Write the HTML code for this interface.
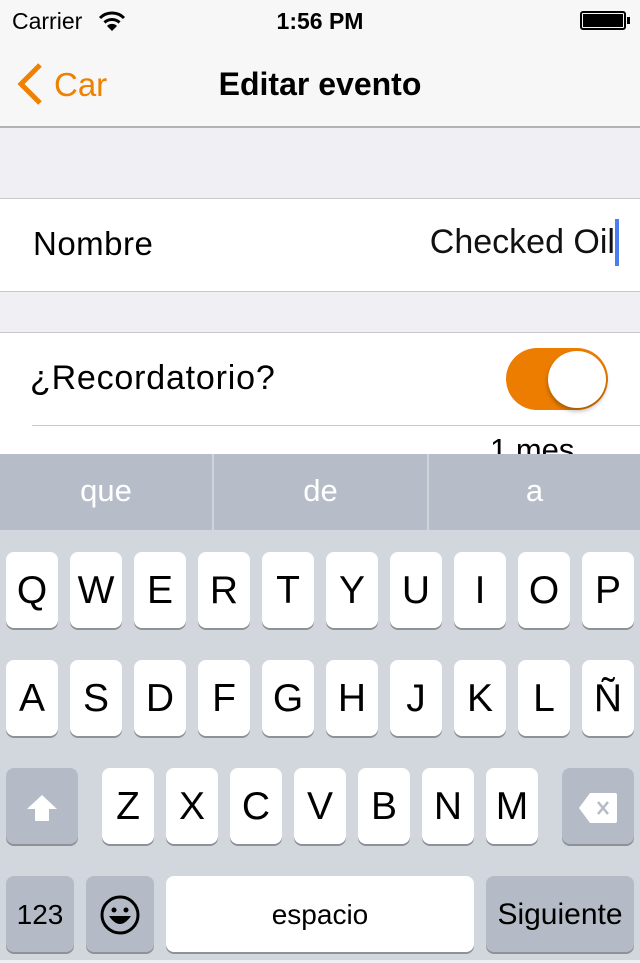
<!DOCTYPE html><html><head><meta charset="utf-8"><style>
*{margin:0;padding:0;box-sizing:border-box}
body{width:640px;height:960px;overflow:hidden;position:relative;background:#efeff4;font-family:"Liberation Sans",sans-serif}
.a{position:absolute}
.k{position:absolute;width:52px;height:76px;background:#fff;border-radius:8px;box-shadow:0 2px 0 #8e9198;font-size:39px;text-align:center;line-height:78px;color:#000}
.g{background:#b4bbc6}
</style></head><body>
<div class="a" style="left:0;top:0;width:640px;height:128px;background:#f7f7f7;border-bottom:2px solid #b2b2b2"></div>
<div class="a" style="left:12px;top:8px;font-size:23px">Carrier</div>
<svg class="a" style="left:98px;top:10px" width="28" height="22" viewBox="0 0 28 22"><path d="M2 8 A17 17 0 0 1 26 8" stroke="#000" stroke-width="3" fill="none"/><path d="M6.5 12.5 A11 11 0 0 1 21.5 12.5" stroke="#000" stroke-width="3" fill="none"/><path d="M14 21 L9 16 A7 7 0 0 1 19 16Z" fill="#000"/></svg>
<div class="a" style="left:0;width:640px;top:8px;text-align:center;font-size:23px;font-weight:bold">1:56 PM</div>
<div class="a" style="left:580px;top:11px;width:46px;height:19px;border:2px solid #000;border-radius:3px;padding:1px"><div style="width:100%;height:100%;background:#000"></div></div>
<div class="a" style="left:627px;top:17px;width:3px;height:7px;background:#000"></div>
<svg class="a" style="left:14px;top:62px" width="30" height="44" viewBox="0 0 30 44"><path d="M26 3 L7 22 L26 41" stroke="#ef8000" stroke-width="5" fill="none"/></svg>
<div class="a" style="left:54px;top:66px;font-size:33px;color:#ef8000">Car</div>
<div class="a" style="left:0;width:640px;top:66px;text-align:center;font-size:32px;font-weight:bold">Editar evento</div>
<div class="a" style="left:0;top:198px;width:640px;height:94px;background:#fff;border-top:1px solid #c8c7cc;border-bottom:1px solid #c8c7cc"></div>
<div class="a" style="left:33px;top:225px;font-size:33px;letter-spacing:0.5px">Nombre</div>
<div class="a" style="right:25px;top:223px;font-size:34px;color:#111">Checked Oil</div>
<div class="a" style="left:615px;top:219px;width:4px;height:47px;background:#4a7cf3"></div>
<div class="a" style="left:0;top:332px;width:640px;height:130px;background:#fff;border-top:1px solid #c8c7cc"></div>
<div class="a" style="left:30px;top:359px;font-size:34px;letter-spacing:0.8px">¿Recordatorio?</div>
<div class="a" style="left:506px;top:348px;width:102px;height:62px;border-radius:31px;background:#ec7d00"></div>
<div class="a" style="left:548px;top:351px;width:58px;height:57px;border-radius:50%;background:#fff;box-shadow:0 3px 5px rgba(0,0,0,.3)"></div>
<div class="a" style="left:32px;top:425px;width:608px;height:1px;background:#c8c7cc"></div>
<div class="a" style="left:490px;top:432px;font-size:31px">1 mes</div>
<div class="a" style="left:0;top:454px;width:640px;height:506px;background:#d2d6dd"></div>
<div class="a" style="left:0;top:454px;width:640px;height:76px;background:#b6bdc8;color:#fff;font-size:31px;line-height:74px">
<span class="a" style="left:0;width:212px;text-align:center">que</span><span class="a" style="left:212px;width:2px;height:76px;background:#d0d4da"></span>
<span class="a" style="left:214px;width:213px;text-align:center">de</span><span class="a" style="left:427px;width:2px;height:76px;background:#d0d4da"></span>
<span class="a" style="left:429px;width:211px;text-align:center">a</span></div>
<div class="k" style="left:6px;top:552px">Q</div><div class="k" style="left:70px;top:552px">W</div><div class="k" style="left:134px;top:552px">E</div><div class="k" style="left:198px;top:552px">R</div><div class="k" style="left:262px;top:552px">T</div><div class="k" style="left:326px;top:552px">Y</div><div class="k" style="left:390px;top:552px">U</div><div class="k" style="left:454px;top:552px">I</div><div class="k" style="left:518px;top:552px">O</div><div class="k" style="left:582px;top:552px">P</div>
<div class="k" style="left:6px;top:660px">A</div><div class="k" style="left:70px;top:660px">S</div><div class="k" style="left:134px;top:660px">D</div><div class="k" style="left:198px;top:660px">F</div><div class="k" style="left:262px;top:660px">G</div><div class="k" style="left:326px;top:660px">H</div><div class="k" style="left:390px;top:660px">J</div><div class="k" style="left:454px;top:660px">K</div><div class="k" style="left:518px;top:660px">L</div><div class="k" style="left:582px;top:660px">Ñ</div>
<div class="k g" style="left:6px;top:768px;width:72px"><svg style="margin-top:26px" width="32" height="28" viewBox="0 0 32 28"><path d="M16 1 L31 15 L23 15 L23 27 L9 27 L9 15 L1 15Z" fill="#fff"/></svg></div>
<div class="k" style="left:102px;top:768px">Z</div><div class="k" style="left:166px;top:768px">X</div><div class="k" style="left:230px;top:768px">C</div><div class="k" style="left:294px;top:768px">V</div><div class="k" style="left:358px;top:768px">B</div><div class="k" style="left:422px;top:768px">N</div><div class="k" style="left:486px;top:768px">M</div>
<div class="k g" style="left:562px;top:768px;width:72px"><svg style="margin-top:24px" width="40" height="32" viewBox="0 0 40 32"><path d="M12 1 L37 1 Q39 1 39 3 L39 29 Q39 31 37 31 L12 31 L1 16Z" fill="#fff"/><path d="M20 10 L30 22 M30 10 L20 22" stroke="#b4bbc6" stroke-width="2.5"/></svg></div>
<div class="k g" style="left:6px;top:876px;width:68px;font-size:28px">123</div>
<div class="k g" style="left:86px;top:876px;width:68px"><svg style="margin-top:18px" width="42" height="42" viewBox="0 0 42 42"><circle cx="21" cy="21" r="18" stroke="#000" stroke-width="3" fill="none"/><circle cx="15" cy="16" r="2.5"/><circle cx="27" cy="16" r="2.5"/><path d="M10 22 Q21 38 32 22Z" fill="#000"/></svg></div>
<div class="k" style="left:166px;top:876px;width:308px;font-size:28px">espacio</div>
<div class="k g" style="left:486px;top:876px;width:148px;font-size:30px">Siguiente</div>
</body></html>
